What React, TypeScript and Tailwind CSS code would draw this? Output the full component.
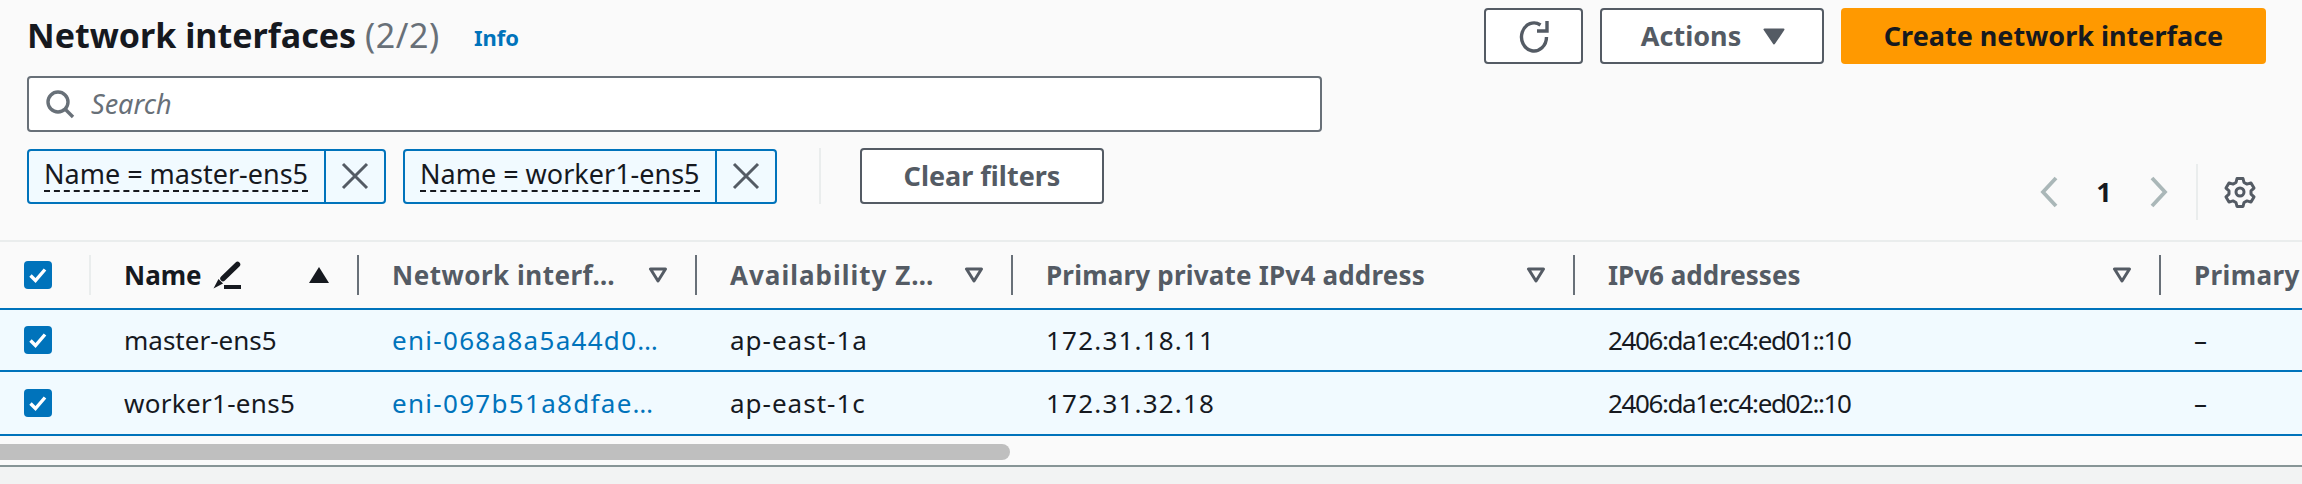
const font = { fontFamily: '"Noto Sans", sans-serif' };

function Check() {
  return (
    <div className="w-[28px] h-[28px] bg-[#0073bb] rounded-[4px] flex items-center justify-center">
      <svg className="w-[20px] h-[20px]" viewBox="0 0 20 20" fill="none" stroke="white" strokeWidth="3.4">
        <path d="M2.5 10.5l5 5L17 4.5" />
      </svg>
    </div>
  );
}

function FilterCaret({ className = "" }: { className?: string }) {
  return (
    <svg className={`w-[20px] h-[16px] ${className}`} viewBox="0 0 20 16" fill="none" stroke="#545b64" strokeWidth="3">
      <path d="M2.5 2h15L10 14z" strokeLinejoin="round" />
    </svg>
  );
}

function Close() {
  return (
    <svg className="w-[28px] h-[28px]" viewBox="0 0 28 28" fill="none" stroke="#545b64" strokeWidth="3">
      <path d="M2 2l24 24M26 2L2 26" />
    </svg>
  );
}

function Token({ label, width }: { label: string; width: string }) {
  return (
    <div className={`flex h-[55px] border-2 border-[#0073bb] rounded-[4px] bg-[#f1faff] ${width}`}>
      <div className="flex-1 flex items-center pl-[15px] text-[#16191f] text-[27px] leading-none whitespace-nowrap">
        <span className="border-b-2 border-dashed border-[#16191f] pb-[3px]">{label}</span>
      </div>
      <div className="w-[60px] border-l-2 border-[#0073bb] flex items-center justify-center">
        <Close />
      </div>
    </div>
  );
}

const columns = [
  { label: "Network interf…", cls: "tracking-[0.5px]" },
  { label: "Availability Z…", cls: "tracking-[1px]" },
  { label: "Primary private IPv4 address", cls: "tracking-[0.2px]" },
  { label: "IPv6 addresses", cls: "tracking-normal" },
];

const rows = [
  { name: "master-ens5", nameCls: "tracking-normal", eni: "eni-068a8a5a44d0…", az: "ap-east-1a", ipv4: "172.31.18.11", ipv6: "2406:da1e:c4:ed01::10", h: "h-[62px]" },
  { name: "worker1-ens5", nameCls: "tracking-[0.3px]", eni: "eni-097b51a8dfae…", az: "ap-east-1c", ipv4: "172.31.32.18", ipv6: "2406:da1e:c4:ed02::10", h: "h-[64px]" },
];

const grid = "grid grid-cols-[91px_268px_338px_316px_562px_586px_1fr]";

export default function App() {
  return (
    <div className="w-[2302px] h-[484px] bg-[#fafafa] overflow-hidden flex flex-col" style={font}>
      {/* Header + filters */}
      <div className="h-[240px] flex justify-between pl-[27px] pr-[36px]">
        <div className="w-[1295px] flex flex-col">
          <div className="h-[76px] flex items-start pt-[13px]">
            <h1 className="text-[34px] leading-[44px] font-bold text-[#16191f] whitespace-nowrap">
              Network interfaces <span className="font-normal text-[#687078] tracking-[0.6px]">(2/2)</span>
            </h1>
            <span className="ml-[34px] mt-[8px] text-[22px] leading-[32px] font-bold text-[#0073bb]">Info</span>
          </div>
          <div className="h-[56px] border-2 border-[#687078] rounded-[4px] bg-white flex items-center pl-[16px] gap-[16px]">
            <svg className="w-[30px] h-[30px]" viewBox="0 0 30 30" fill="none" stroke="#687078" strokeWidth="3.4">
              <circle cx="13" cy="13" r="10" />
              <path d="M20 20l8 8" />
            </svg>
            <span className="italic text-[27px] text-[#687078]">Search</span>
          </div>
          <div className="mt-[16px] flex items-center">
            <Token label="Name = master-ens5" width="w-[359px]" />
            <div className="w-[17px]" />
            <Token label="Name = worker1-ens5" width="w-[374px]" />
            <div className="ml-[42px] w-[2px] h-[56px] bg-[#eaeded]" />
            <button className="ml-[39px] w-[244px] h-[56px] border-2 border-[#545b64] rounded-[4px] bg-white text-[27px] font-bold text-[#545b64]">
              Clear filters
            </button>
          </div>
        </div>

        <div className="w-[782px] flex flex-col items-end">
          <div className="mt-[8px] flex gap-[17px]">
            <button className="w-[99px] h-[56px] border-2 border-[#545b64] rounded-[4px] bg-white flex items-center justify-center">
              <svg className="w-[36px] h-[36px]" viewBox="0 0 36 36" fill="none" stroke="#545b64" strokeWidth="3.4">
                <path d="M30.5 19a12.5 14 0 1 1-6-12" />
                <path d="M31 3v10H21" />
              </svg>
            </button>
            <button className="w-[224px] h-[56px] border-2 border-[#545b64] rounded-[4px] bg-white flex items-center justify-center gap-[22px] pl-[2px] text-[27px] font-bold text-[#545b64]">
              Actions
              <svg className="w-[22px] h-[17px]" viewBox="0 0 22 17" fill="#545b64" stroke="#545b64" strokeWidth="2" strokeLinejoin="round">
                <path d="M1.5 1.5h19L11 15.5z" />
              </svg>
            </button>
            <button className="w-[425px] h-[56px] rounded-[4px] bg-[#ff9900] text-[27px] font-bold text-[#16191f]">
              Create network interface
            </button>
          </div>
          <div className="mt-[100px] h-[56px] flex items-center">
            <svg className="w-[18px] h-[32px]" viewBox="0 0 18 32" fill="none" stroke="#aab7b8" strokeWidth="3.8">
              <path d="M16 2L3 16l13 14" />
            </svg>
            <span className="w-[92px] text-center text-[27px] font-bold text-[#16191f]">1</span>
            <svg className="w-[18px] h-[32px]" viewBox="0 0 18 32" fill="none" stroke="#aab7b8" strokeWidth="3.8">
              <path d="M2 2l13 14L2 30" />
            </svg>
            <div className="ml-[28px] w-[2px] h-[56px] bg-[#eaeded]" />
            <svg className="ml-[26px] mr-[10px] w-[32px] h-[32px]" viewBox="0 0 32 32" fill="none" stroke="#545b64" strokeWidth="3">
              <circle cx="16" cy="16" r="4" />
              <path d="M13 2.5h6l1 4 3 1.6 4-1.2 3 5.2-3 2.8v3.2l3 2.8-3 5.2-4-1.2-3 1.6-1 4h-6l-1-4-3-1.6-4 1.2-3-5.2 3-2.8v-3.2l-3-2.8 3-5.2 4 1.2 3-1.6z" strokeLinejoin="round" />
            </svg>
          </div>
        </div>
      </div>

      {/* Table */}
      <div className="border-t-2 border-[#eaeded]">
        <div className={`${grid} h-[66px]`}>
          <div className="flex items-center pl-[24px] pr-0 justify-between">
            <Check />
            <div className="w-[2px] h-[40px] bg-[#eaeded]" />
          </div>
          <div className="flex items-center pl-[33px] pr-0">
            <span className="text-[26px] font-bold text-[#16191f]">Name</span>
            <svg className="ml-[11px] w-[28px] h-[28px]" viewBox="0 0 28 28">
              <path d="M10 17.5L24.5 3.5" stroke="#16191f" strokeWidth="5.5" strokeLinecap="round" />
              <path d="M5.5 18l4.5 4.5L0.5 27.5z" fill="#16191f" />
              <path d="M11 24h17v4H11z" fill="#16191f" />
            </svg>
            <svg className="ml-auto mr-[28px] w-[20px] h-[16px]" viewBox="0 0 20 16" fill="#16191f">
              <path d="M10 0l10 16H0z" />
            </svg>
            <div className="w-[2px] h-[40px] bg-[#687078]" />
          </div>
          {columns.map((c) => (
            <div key={c.label} className="flex items-center pl-[33px]">
              <span className={`text-[26px] font-bold text-[#545b64] whitespace-nowrap ${c.cls}`}>{c.label}</span>
              <FilterCaret className="ml-auto mr-[27px]" />
              <div className="w-[2px] h-[40px] bg-[#687078]" />
            </div>
          ))}
          <div className="flex items-center pl-[33px]">
            <span className="text-[26px] font-bold text-[#545b64] whitespace-nowrap tracking-[0.4px]">Primary</span>
          </div>
        </div>

        <div className="border-t-2 border-[#0073bb]">
          {rows.map((r) => (
            <div key={r.name} className={`${grid} ${r.h} bg-[#f1faff] border-b-2 border-[#0073bb] items-center text-[26px] text-[#16191f] whitespace-nowrap`}>
              <div className="pl-[24px]"><Check /></div>
              <div className={`pl-[33px] ${r.nameCls}`}>{r.name}</div>
              <div className="pl-[33px] text-[#0073bb] tracking-[1.3px]">{r.eni}</div>
              <div className="pl-[33px] tracking-[1px]">{r.az}</div>
              <div className="pl-[33px] tracking-[1.2px]">{r.ipv4}</div>
              <div className="pl-[33px] tracking-[-1.4px]">{r.ipv6}</div>
              <div className="pl-[33px]">–</div>
            </div>
          ))}
        </div>

        {/* Scrollbar */}
        <div className="h-[31px] pt-[8px] border-b-2 border-[#879596]">
          <div className="w-[1010px] h-[16px] bg-[#bfbfbf] rounded-r-[8px]" />
        </div>
      </div>
      <div className="flex-1 bg-[#f2f3f3]" />
    </div>
  );
}
